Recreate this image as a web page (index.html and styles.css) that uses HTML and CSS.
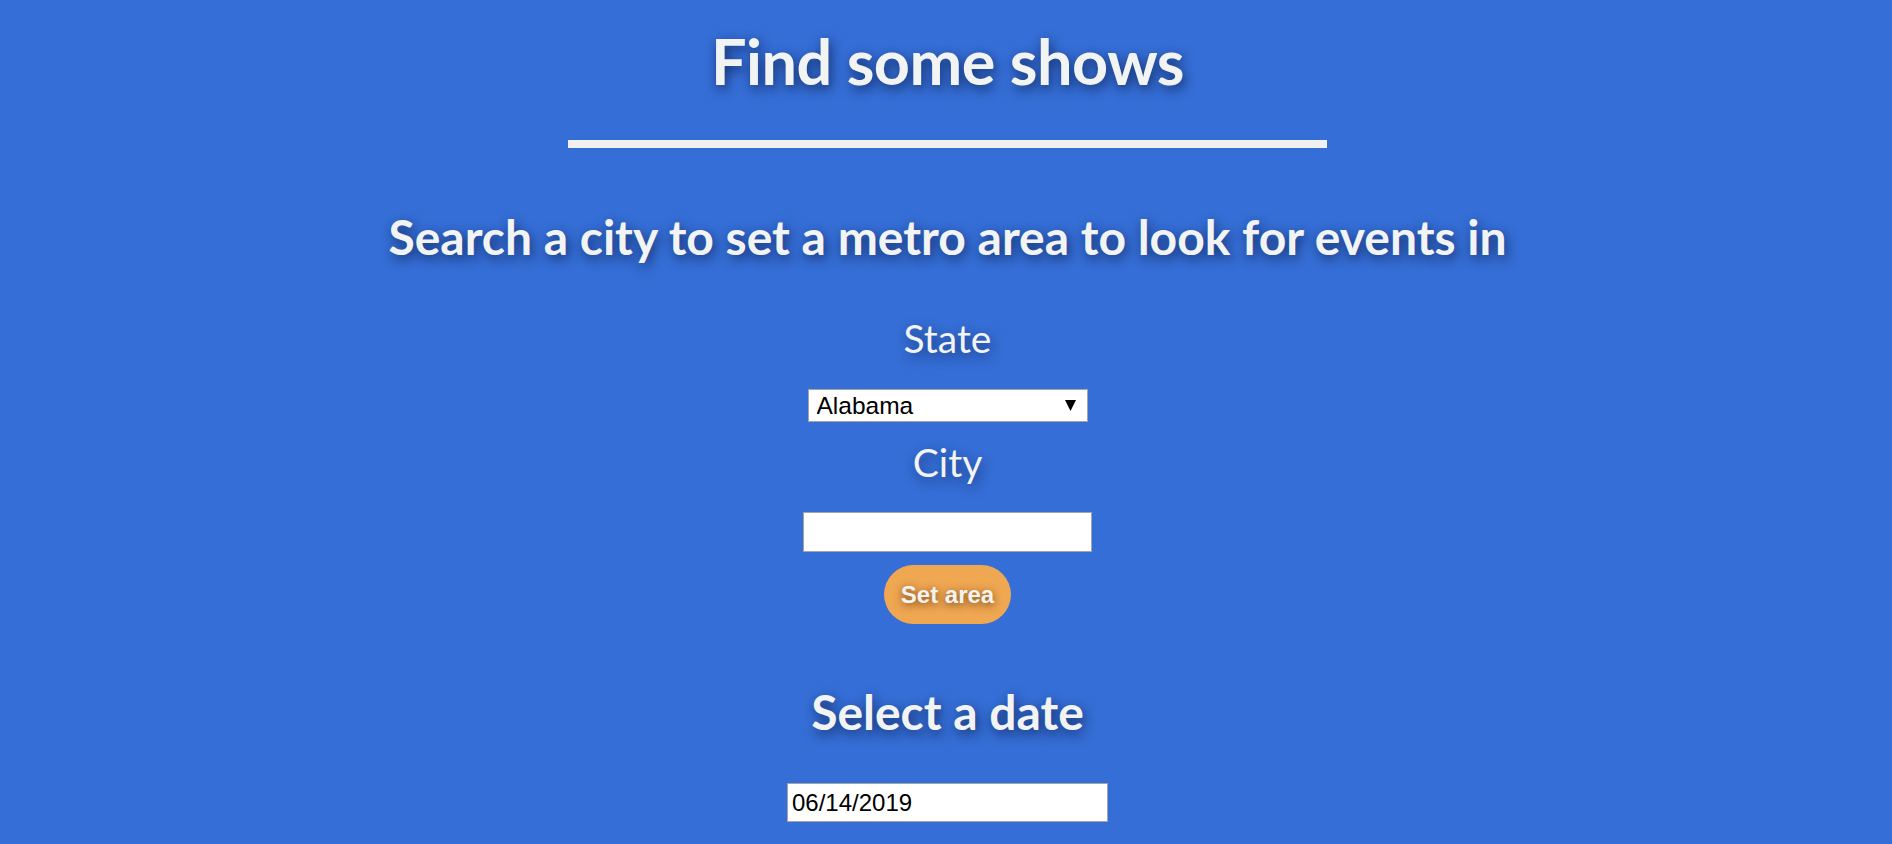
FILE: index.html
```html
<!DOCTYPE html>
<html lang="en">
<head>
<meta charset="utf-8">
<title>Find some shows</title>
<link rel="stylesheet" href="styles.css">
</head>
<body>
<main class="page">
  <h1 class="title">Find some shows</h1>
  <hr class="divider">
  <h2 class="subtitle">Search a city to set a metro area to look for events in</h2>
  <label class="field-label" for="state">State</label>
  <select class="state-select" id="state">
    <option>Alabama</option>
    <option>Alaska</option>
    <option>Arizona</option>
  </select>
  <label class="field-label city-label" for="city">City</label>
  <input class="city-input" id="city" type="text">
  <button class="set-btn" type="button">Set area</button>
  <h2 class="subtitle date-title">Select a date</h2>
  <input class="date-input" type="text" value="06/14/2019">
</main>
</body>
</html>
```

FILE: styles.css
```css
html, body {
  margin: 0;
  padding: 0;
}

body {
  background: #356ed6;
  color: #f2f3f3;
  font-family: Lato, "Open Sans", sans-serif;
  height: 844px;
  overflow: hidden;
}

.page {
  display: flex;
  flex-direction: column;
  align-items: center;
  text-align: center;
  padding-left: 3px;
}

.title {
  margin: 29px 0 0;
  font-size: 63px;
  letter-spacing: -0.5px;
  line-height: 1;
  font-weight: 700;
  text-shadow: 2px 4px 12px rgba(10, 25, 70, 0.75);
}

.divider {
  width: 759px;
  height: 8px;
  margin: 48px 0 0;
  border: none;
  background: #f0f2f2;
}

.subtitle {
  margin: 65px 0 0;
  font-size: 48px;
  line-height: 1;
  font-weight: 700;
  text-shadow: 2px 4px 12px rgba(10, 25, 70, 0.75);
}

.field-label {
  margin-top: 58px;
  font-size: 39px;
  line-height: 1;
  font-weight: 400;
  text-shadow: 2px 4px 12px rgba(10, 25, 70, 0.6);
}

.city-label {
  margin-top: 21px;
}

.state-select {
  margin-top: 31px;
  width: 280px;
  height: 33px;
  box-sizing: border-box;
  border: 1px solid #a4a4a4;
  border-radius: 0;
  background: #fff url("data:image/svg+xml,%3Csvg xmlns='http://www.w3.org/2000/svg' width='11' height='11'%3E%3Cpath d='M0 0H11L5.5 11Z' fill='%23000'/%3E%3C/svg%3E") no-repeat right 11px center;
  -webkit-appearance: none;
  appearance: none;
  padding: 0 0 0 8px;
  font-family: "Liberation Sans", Arial, sans-serif;
  font-size: 24.5px;
  color: #000;
}

.city-input {
  margin-top: 30px;
  width: 289px;
  height: 40px;
  box-sizing: border-box;
  border: 1px solid #a4a4a4;
  padding: 0 4px;
  font-family: "Liberation Sans", Arial, sans-serif;
  font-size: 24px;
}

.set-btn {
  margin-top: 13px;
  width: 127px;
  height: 59px;
  border: none;
  border-radius: 30px;
  background: #f0a752;
  color: #f2f2f2;
  font-family: "Liberation Sans", Arial, sans-serif;
  font-weight: 700;
  font-size: 24px;
  padding: 0;
  text-shadow: 0 2px 8px rgba(90, 50, 0, 0.85);
}

.date-title {
  margin-top: 64px;
}

.date-input {
  margin-top: 47px;
  width: 321px;
  height: 39px;
  box-sizing: border-box;
  border: 1px solid #a4a4a4;
  padding: 0 4px;
  font-family: "Liberation Sans", Arial, sans-serif;
  font-size: 24px;
  color: #000;
}
```
